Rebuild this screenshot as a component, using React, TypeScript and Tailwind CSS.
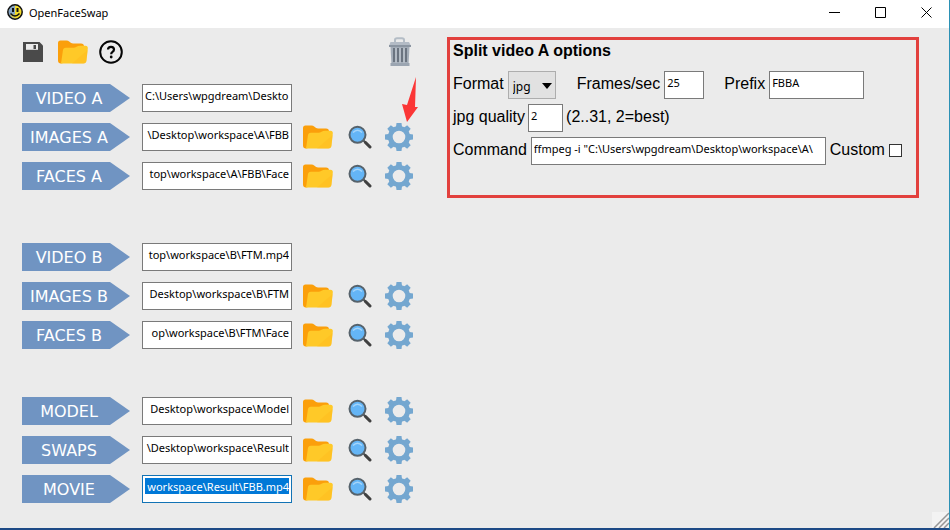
import React from "react";

const FIELD_FONT = "font-['Noto_Sans','Open_Sans',sans-serif]";

function FolderIcon() {
  return (
    <svg width="30" height="24" viewBox="0 0 30 24" aria-hidden="true">
      <path d="M0 3Q0 0.500 2.500 0.500H8.500Q10 0.500 11.500 1.800Q13 3.500 15 3.500H23Q26 3.500 26 6.500V18L3 23.500Q0 23.500 0 20.500Z" fill="#fb9f0b" />
      <path d="M5 9.800Q5.500 7.800 7.800 7.800H15.500Q17 7.800 18.500 6.800Q20 5.800 22 5.800H27.500Q30 5.800 29.800 8.500L28.500 20.500Q28.200 23.500 25.300 23.500H2.500Q3.200 22.500 3.400 21Z" fill="#ffc928" />
      <path d="M29.600 10L28.500 20.500Q28.200 23.500 25.300 23.500H14Z" fill="#ffb91c" opacity=".4" />
    </svg>
  );
}

function SearchIcon() {
  return (
    <svg width="24" height="24" viewBox="0 0 24 24" aria-hidden="true">
      <path d="M15.500 15.500L22 22" stroke="#555" strokeWidth="2.200" />
      <path d="M17.500 17.500L22 22" stroke="#404040" strokeWidth="3" strokeLinecap="round" />
      <circle cx="9.500" cy="9.800" r="8" fill="#64b5f6" stroke="#56626b" strokeWidth="2" />
      <path d="M5 7.500Q9.500 3 14 7.500" fill="none" stroke="#a5d5fa" strokeWidth="1.600" />
    </svg>
  );
}

const TEETH = [0, 45, 90, 135, 180, 225, 270, 315];

function GearIcon() {
  return (
    <svg width="28" height="28" viewBox="0 0 28 28" aria-hidden="true">
      <circle cx="14" cy="14" r="8.700" fill="none" stroke="#74a7d0" strokeWidth="4.800" />
      {TEETH.map((angle) => (
        <path key={angle} d="M10.800 5L11.500 0H16.500L17.200 5Z" fill="#74a7d0" transform={`rotate(${angle} 14 14)`} />
      ))}
    </svg>
  );
}

function TrashIcon() {
  return (
    <svg width="24" height="30" viewBox="0 0 24 30" aria-hidden="true">
      <path d="M7 5V3Q7 1.200 9 1.200H14Q16 1.200 16 3V5" fill="none" stroke="#b4bdc6" strokeWidth="2" />
      <path d="M2.500 5H21L23 9H1Z" fill="#b3bbc5" />
      <path d="M1 8H23V10H1Z" fill="#8b95a1" />
      <path d="M2.500 10H21.500L20.500 28H3.500Z" fill="#a4adb8" />
      <path d="M6 11V25M10 11V25M14 11V25M18 11V25" stroke="#6b7480" strokeWidth="2" />
      <path d="M8 11V26M12 11V26M16 11V26" stroke="#c3cad1" strokeWidth="1" />
      <path d="M2.500 26H21.500V29H2.500Z" fill="#9ba5b1" />
    </svg>
  );
}

function SaveIcon() {
  return (
    <svg width="20" height="20" viewBox="0 0 20 20" aria-hidden="true">
      <path d="M0 0H16.500L20 3.500V20H0Z" fill="#4a4a4a" />
      <path d="M3 2H15V7.800H3Z" fill="#ececec" />
      <path d="M10.500 3H13V7H10.500Z" fill="#4a4a4a" />
    </svg>
  );
}

function HelpIcon() {
  return (
    <svg width="24" height="24" viewBox="0 0 24 24" aria-hidden="true">
      <circle cx="12" cy="12" r="10.800" fill="none" stroke="#050505" strokeWidth="2" />
      <path d="M9 9.500Q9 6.800 12 6.800T15 9.500Q15 11 13.300 12.100Q12.200 12.900 12.200 14.300" fill="none" stroke="#050505" strokeWidth="2.200" />
      <circle cx="12.200" cy="17" r="1.400" fill="#050505" />
    </svg>
  );
}

function AppIcon() {
  return (
    <svg width="16" height="16" viewBox="0 0 16 16" aria-hidden="true">
      <circle cx="8" cy="8" r="7.200" fill="#f4dc2c" />
      <path d="M8 .8A7.200 7.200 0 0 0 8 15.200Z" fill="#86a5c4" />
      <path d="M3 10.500Q5 14 8 14V10.500Z" fill="#e8d33c" />
      <circle cx="8" cy="8" r="7.200" fill="none" stroke="#111" strokeWidth="1.500" />
      <path d="M5 4H7V8H5ZM9.500 4H11.500V8H9.500Z" fill="#111" />
      <path d="M3.500 9.500Q8 14.500 12.500 9.500" fill="none" stroke="#111" strokeWidth="1.500" />
    </svg>
  );
}

type FieldProps = {
  id?: string;
  label?: string;
  value: string;
  width: string;
  alignEnd?: boolean;
  selected?: boolean;
};

function Field({ id, label, value, width, alignEnd, selected }: FieldProps) {
  return (
    <div className={`h-7 shrink-0 border bg-white p-0.5 ${width} ${selected ? "border-[#1273b5]" : "border-[#7a7a7a]"}`}>
      <input
        id={id}
        aria-label={label}
        defaultValue={value}
        className={`block h-4 w-full pt-px text-[11px] leading-[15px] outline-none ${FIELD_FONT} ${alignEnd ? "text-right" : ""} ${
          selected ? "bg-[#0078d7] text-white" : "text-black"
        }`}
      />
    </div>
  );
}

type Row = { name: string; path: string; video?: boolean; start?: boolean; selected?: boolean };

function StepRow({ row }: { row: Row }) {
  return (
    <div className="flex h-7 items-center">
      <button className="h-7 w-[108px] shrink-0 bg-[#7094c2] pt-0.5 pr-[14px] text-center font-['DejaVu_Sans',sans-serif] text-base leading-[26px] text-white [clip-path:polygon(0_0,88px_0,100%_50%,88px_100%,0_100%)]">
        {row.name}
      </button>
      <div className="ml-3">
        <Field label={row.name} value={row.path} width="w-[150px]" alignEnd={!row.start} selected={row.selected} />
      </div>
      {!row.video && (
        <>
          <button aria-label={`Open ${row.name}`} className="ml-[11px]"><FolderIcon /></button>
          <button aria-label={`View ${row.name}`} className="ml-[15px]"><SearchIcon /></button>
          <button aria-label={`Options ${row.name}`} className="ml-[13px]"><GearIcon /></button>
        </>
      )}
    </div>
  );
}

const GROUP_A: Row[] = [
  { name: "VIDEO A", path: "C:\\Users\\wpgdream\\Deskto", video: true, start: true },
  { name: "IMAGES A", path: "\\Desktop\\workspace\\A\\FBB" },
  { name: "FACES A", path: "top\\workspace\\A\\FBB\\Face" },
];
const GROUP_B: Row[] = [
  { name: "VIDEO B", path: "top\\workspace\\B\\FTM.mp4", video: true },
  { name: "IMAGES B", path: "Desktop\\workspace\\B\\FTM" },
  { name: "FACES B", path: "op\\workspace\\B\\FTM\\Face" },
];
const GROUP_C: Row[] = [
  { name: "MODEL", path: "Desktop\\workspace\\Model" },
  { name: "SWAPS", path: "\\Desktop\\workspace\\Result" },
  { name: "MOVIE", path: "workspace\\Result\\FBB.mp4", selected: true },
];

function Group({ rows }: { rows: Row[] }) {
  return (
    <div className="flex flex-col gap-[11px]">
      {rows.map((row) => (
        <StepRow key={row.name} row={row} />
      ))}
    </div>
  );
}

function TitleBar() {
  return (
    <header className="flex h-7 items-center bg-white pl-[7px]">
      <div className="pb-1"><AppIcon /></div>
      <h1 className={`ml-[6px] pb-0.5 text-[11px] leading-4 text-black ${FIELD_FONT}`}>OpenFaceSwap</h1>
      <div className="ml-auto flex pb-1">
        <button aria-label="Minimize" className="flex h-6 w-[46px] items-center justify-center">
          <svg width="11" height="11" viewBox="0 0 11 11"><path d="M0 5.500H11" stroke="#000" /></svg>
        </button>
        <button aria-label="Maximize" className="flex h-6 w-[46px] items-center justify-center">
          <svg width="11" height="11" viewBox="0 0 11 11"><path d="M.5 .5H10.500V10.500H.5Z" fill="none" stroke="#000" /></svg>
        </button>
        <button aria-label="Close" className="flex h-6 w-[46px] items-center justify-center">
          <svg width="11" height="11" viewBox="0 0 11 11"><path d="M.5 .5L10.500 10.500M10.500 .5L.5 10.500" stroke="#000" /></svg>
        </button>
      </div>
    </header>
  );
}

function OptionsPanel() {
  return (
    <section className="flex h-[161px] flex-1 flex-col gap-[5px] overflow-hidden border-[3px] border-[#e2403d] pl-[3px] font-['Liberation_Sans',Arial,sans-serif] text-base leading-5 whitespace-nowrap text-black">
      <h2 className="pt-px pb-[5px] font-bold">Split video A options</h2>
      <div className="flex items-center">
        <label htmlFor="format" className="pb-0.5">Format</label>
        <div className="relative ml-1 h-7 w-12">
          <select id="format" className={`h-7 w-full appearance-none border border-[#adadad] bg-[#e1e1e1] pt-1 pl-1 text-xs text-black outline-none ${FIELD_FONT}`}>
            <option>jpg</option>
            <option>png</option>
          </select>
          <svg className="pointer-events-none absolute top-3 right-1" width="10" height="6" viewBox="0 0 10 6" aria-hidden="true">
            <path d="M0 0H10L5 6Z" fill="#000" />
          </svg>
        </div>
        <label htmlFor="fps" className="mr-1 ml-[21px] pb-0.5">Frames/sec</label>
        <Field id="fps" value="25" width="w-10" />
        <label htmlFor="prefix" className="mr-1 ml-5 pb-0.5">Prefix</label>
        <Field id="prefix" value="FBBA" width="w-[95px]" />
      </div>
      <div className="flex items-center gap-[3px]">
        <label htmlFor="quality" className="pb-0.5">jpg quality</label>
        <Field id="quality" value="2" width="w-[35px]" />
        <span className="pb-0.5">(2..31, 2=best)</span>
      </div>
      <div className="flex items-center gap-1">
        <label htmlFor="command" className="pb-0.5">Command</label>
        <Field id="command" value={'ffmpeg -i "C:\\Users\\wpgdream\\Desktop\\workspace\\A\\'} width="w-[295px]" />
        <label htmlFor="custom" className="pb-0.5">Custom</label>
        <input id="custom" type="checkbox" className="mb-0.5 size-[13px] appearance-none border border-[#333] bg-white checked:bg-[#0078d7]" />
      </div>
    </section>
  );
}

export default function App() {
  return (
    <div className="flex min-h-screen flex-col border-r border-b-2 border-r-[#2b91b5] border-b-[#1d4a86] bg-[#ebebeb]">
      <TitleBar />
      <main className="relative flex flex-1 items-start pt-[9px] pr-[30px] pl-[22px]">
        <div className="w-[425px] shrink-0">
          <div className="mb-[18px] flex h-[29px] items-center">
            <button aria-label="Save" className="ml-px"><SaveIcon /></button>
            <button aria-label="Open" className="ml-[15px]"><FolderIcon /></button>
            <button aria-label="Help" className="ml-[11px]"><HelpIcon /></button>
            <button aria-label="Delete" className="mr-[35px] ml-auto"><TrashIcon /></button>
          </div>
          <Group rows={GROUP_A} />
          <div className="mt-[53px]"><Group rows={GROUP_B} /></div>
          <div className="mt-12"><Group rows={GROUP_C} /></div>
        </div>
        <OptionsPanel />
        <svg className="pointer-events-none absolute top-[49px] left-[401px]" width="18" height="46" viewBox="0 0 18 46" aria-hidden="true">
          <path d="M15 0L14 30H17L6 45L1 27L6 28Z" fill="#fb3636" />
        </svg>
        <svg className="absolute right-0 bottom-0" width="17" height="16" viewBox="0 0 17 16" aria-hidden="true">
          <path d="M0 0H17V16H0Z" fill="#f3f3f3" />
          <path d="M2 16L17 1M7 16L17 6M12 16L17 11" stroke="#969696" strokeWidth="1.500" />
        </svg>
      </main>
    </div>
  );
}
